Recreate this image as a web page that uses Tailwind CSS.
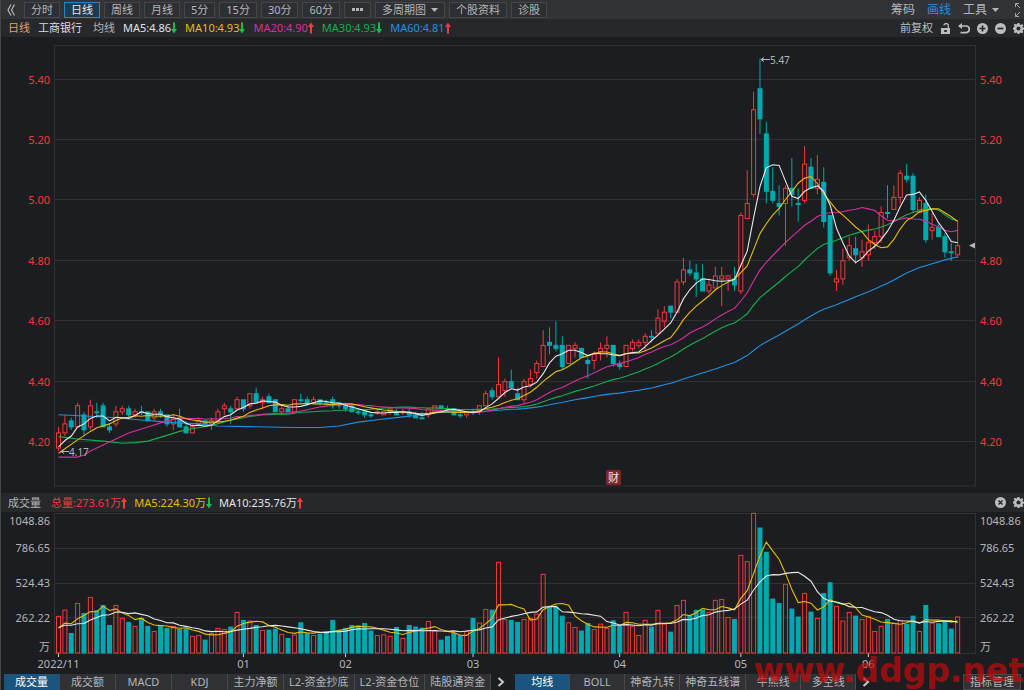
<!DOCTYPE html>
<html lang="zh-CN">
<head>
    <meta charset="UTF-8">
    <meta name="viewport" content="width=device-width, initial-scale=1.0">
    <title>工商银行 日线</title>
    <script src="https://cdn.jsdelivr.net/npm/@tailwindcss/browser@4"></script>
    <style>
        body {
            font-family: 'Noto Sans', 'Noto Sans CJK SC', sans-serif;
        }
    </style>
</head>
<body class="bg-[#1c1d21] text-[11px] leading-4 text-[#b4b5b8]">
    <svg class="hidden">
        <symbol id="up" viewBox="0 0 6 12"><path d="M3 0.5 6 5H4v6.500H2V5H0z" fill="#fb3a3a"/></symbol>
        <symbol id="down" viewBox="0 0 6 12"><path d="M3 11.500 6 7H4V0.500H2V7H0z" fill="#12c04e"/></symbol>
        <symbol id="gear" viewBox="0 0 24 24"><path fill="currentColor" fill-rule="evenodd" d="M10 0h4l.7 3.400 2.200.9 2.900-1.900 2.800 2.800-1.900 2.900.9 2.200L24 10v4l-2.400.7-.9 2.200 1.900 2.900-2.800 2.800-2.900-1.900-2.200.9L14 24h-4l-.7-2.400-2.200-.9-2.900 1.900-2.800-2.800 1.900-2.900-.9-2.200L0 14v-4l2.400-.7.9-2.200-1.900-2.900 2.800-2.800 2.900 1.900 2.200-.9zM12 7.500a4.500 4.500 0 1 0 0 9 4.500 4.500 0 0 0 0-9z"/></symbol>
        <symbol id="next" viewBox="0 0 8 10"><path d="M1.500 1 6 5 1.500 9" fill="none" stroke="currentColor" stroke-width="2"/></symbol>
    </svg>

    <div class="relative min-h-screen overflow-hidden">
        <!-- Period toolbar -->
        <header class="flex h-[19px] items-center justify-between border-l border-[#46474b] bg-[#323337]">
            <nav class="flex items-center gap-1">
                <button type="button" aria-label="收起" class="flex w-[19px] justify-center">
                    <svg class="h-3 w-2" viewBox="0 0 8 12" fill="none" stroke="#b4b5b8" stroke-width="1.2"><path d="M4 0.500 1 6l3 5.500M7.500 0.500 4.500 6l3 5.500"/></svg>
                </button>
                <button type="button" class="flex h-4 items-center border border-[#45464a] bg-[#2e2f33] px-1.5">分时</button>
                <button type="button" class="flex h-4 items-center border border-[#2186d0] bg-[#203a50] px-1.5 text-[#e6e8ea]">日线</button>
                <button type="button" class="flex h-4 items-center border border-[#45464a] bg-[#2e2f33] px-1.5">周线</button>
                <button type="button" class="flex h-4 items-center border border-[#45464a] bg-[#2e2f33] px-1.5">月线</button>
                <button type="button" class="flex h-4 items-center border border-[#45464a] bg-[#2e2f33] px-1.5">5分</button>
                <button type="button" class="flex h-4 items-center border border-[#45464a] bg-[#2e2f33] px-1.5">15分</button>
                <button type="button" class="flex h-4 items-center border border-[#45464a] bg-[#2e2f33] px-1.5">30分</button>
                <button type="button" class="flex h-4 items-center border border-[#45464a] bg-[#2e2f33] px-1.5">60分</button>
                <button type="button" aria-label="更多周期" class="flex h-4 items-center border border-[#45464a] bg-[#2e2f33] px-[7px]">
                    <svg class="h-[3px] w-[11px]" viewBox="0 0 11 3" fill="#b4b5b8"><path d="M0 0h3v3H0zM4 0h3v3H4zM8 0h3v3H8z"/></svg>
                </button>
                <button type="button" class="flex h-4 items-center gap-1 border border-[#45464a] bg-[#2e2f33] px-1.5">多周期图
                    <svg class="ml-px h-1 w-[7px]" viewBox="0 0 7 4"><path d="M0 0h7L3.500 4z" fill="#b4b5b8"/></svg>
                </button>
                <button type="button" class="flex h-4 items-center border border-[#45464a] bg-[#2e2f33] px-1.5">个股资料</button>
                <button type="button" class="flex h-4 items-center border border-[#45464a] bg-[#2e2f33] px-1.5">诊股</button>
            </nav>
            <div class="flex items-center gap-3 pr-[3px] text-xs">
                <button type="button">筹码</button>
                <button type="button" class="text-[#2190e0]">画线</button>
                <button type="button" class="flex items-center gap-1">工具
                    <svg class="ml-px h-1 w-[7px]" viewBox="0 0 7 4"><path d="M0 0h7L3.500 4z" fill="#b4b5b8"/></svg>
                </button>
                <button type="button" aria-label="全屏" class="ml-1">
                    <svg class="h-[14px] w-[6px]" viewBox="0 0 6 14" fill="none" stroke="#a4a5a8"><path d="M.5 4V.5H4M.5.5l4.500 4.500M.5 10v3.500H4M.5 13.500l4.500-4.500"/></svg>
                </button>
            </div>
        </header>

        <!-- Moving average legend -->
        <div class="flex h-[18px] items-center justify-between border-l border-[#46474b] bg-[#27282c]">
            <div class="flex items-center gap-2 pl-[7px]">
                <span class="text-[#dca56c]">日线</span>
                <span class="mr-[3px] text-[#dcdde0]">工商银行</span>
                <span>均线</span>
                <span class="flex items-center text-[#e2e3e6]">MA5:4.86<svg class="h-3 w-1.5"><use href="#down"/></svg></span>
                <span class="flex items-center text-[#e5bd07]">MA10:4.93<svg class="h-3 w-1.5"><use href="#down"/></svg></span>
                <span class="flex items-center text-[#d4309f]">MA20:4.90<svg class="h-3 w-1.5"><use href="#up"/></svg></span>
                <span class="flex items-center text-[#14b04c]">MA30:4.93<svg class="h-3 w-1.5"><use href="#down"/></svg></span>
                <span class="flex items-center text-[#2190e0]">MA60:4.81<svg class="h-3 w-1.5"><use href="#up"/></svg></span>
            </div>
            <div class="flex items-center gap-[7px] text-[#bcbdc0]">
                <button type="button">前复权</button>
                <button type="button" aria-label="解锁">
                    <svg class="h-[11px] w-[11px]" viewBox="0 0 11 11"><path d="M8.300 5.500V3a2.200 2.200 0 0 0-4.400-.6" fill="none" stroke="currentColor" stroke-width="1.300"/><path fill="currentColor" fill-rule="evenodd" d="M1 5h9v6H1zM4.200 7v2h2.600V7z"/></svg>
                </button>
                <button type="button" aria-label="撤销">
                    <svg class="h-[11px] w-[12px]" viewBox="0 0 12 11"><path d="M2 3h6a3.300 3.300 0 0 1 0 6.600H2.500" fill="none" stroke="currentColor" stroke-width="1.700"/><path d="M0 3 4 0v6z" fill="currentColor"/></svg>
                </button>
                <button type="button" aria-label="放大">
                    <svg class="h-[11px] w-[11px]" viewBox="0 0 11 11"><circle cx="5.500" cy="5.500" r="5.500" fill="currentColor"/><path d="M2.500 5.500h6M5.500 2.500v6" stroke="#27282c" stroke-width="1.700"/></svg>
                </button>
                <button type="button" aria-label="缩小">
                    <svg class="h-[11px] w-[11px]" viewBox="0 0 11 11"><circle cx="5.500" cy="5.500" r="5.500" fill="currentColor"/><path d="M2.500 5.500h6" stroke="#27282c" stroke-width="1.700"/></svg>
                </button>
                <button type="button" aria-label="设置"><svg class="h-[11px] w-[11px]"><use href="#gear"/></svg></button>
            </div>
        </div>

        <svg id="priceChart" class="block w-full" viewBox="0 37 1024 456"></svg>

        <!-- Volume legend -->
        <div class="flex h-[19px] items-center justify-between border-l border-[#46474b] bg-[#27282c]">
            <div class="flex items-center gap-[7px] pl-[7px]">
                <span class="mr-[3px]">成交量</span>
                <span class="flex items-center text-[#f03a3a]">总量:273.61万<svg class="h-3 w-1.5"><use href="#up"/></svg></span>
                <span class="flex items-center text-[#e5bd07]">MA5:224.30万<svg class="h-3 w-1.5"><use href="#down"/></svg></span>
                <span class="flex items-center text-[#e2e3e6]">MA10:235.76万<svg class="h-3 w-1.5"><use href="#up"/></svg></span>
            </div>
            <div class="flex items-center gap-[7px] text-[#bcbdc0]">
                <button type="button" aria-label="关闭">
                    <svg class="h-[11px] w-[11px]" viewBox="0 0 11 11"><circle cx="5.500" cy="5.500" r="5.500" fill="currentColor"/><path d="m3.500 3.500 4 4m0-4-4 4" stroke="#27282c" stroke-width="1.500"/></svg>
                </button>
                <button type="button" aria-label="设置"><svg class="h-[11px] w-[11px]"><use href="#gear"/></svg></button>
            </div>
        </div>

        <svg id="volumeChart" class="block w-full" viewBox="0 512 1024 162"></svg>

        <!-- Indicator tabs -->
        <footer class="flex h-4 items-stretch border-l border-[#46474b] pl-[3px]">
            <nav class="flex bg-[#303135]">
                <button type="button" class="min-w-[56px] border-r border-[#48494d] bg-[#1b557f] px-[5px] text-white">成交量</button>
                <button type="button" class="min-w-[56px] border-r border-[#48494d] px-[5px]">成交额</button>
                <button type="button" class="min-w-[56px] border-r border-[#48494d] px-[5px]">MACD</button>
                <button type="button" class="min-w-[56px] border-r border-[#48494d] px-[5px]">KDJ</button>
                <button type="button" class="min-w-[56px] border-r border-[#48494d] px-[5px]">主力净额</button>
                <button type="button" class="min-w-[56px] border-r border-[#48494d] px-[5px]">L2-资金抄底</button>
                <button type="button" class="min-w-[56px] border-r border-[#48494d] px-[5px]">L2-资金仓位</button>
                <button type="button" class="min-w-[56px] border-r border-[#48494d] px-[5px]">陆股通资金</button>
            </nav>
            <button type="button" aria-label="更多副图指标" class="flex w-6 items-center justify-center pr-1 text-[#c8c9cc]"><svg class="h-[10px] w-2"><use href="#next"/></svg></button>
            <nav class="flex bg-[#303135]">
                <button type="button" class="min-w-[55px] border-r border-[#48494d] bg-[#1b557f] px-[5px] text-white">均线</button>
                <button type="button" class="min-w-[55px] border-r border-[#48494d] px-[5px]">BOLL</button>
                <button type="button" class="min-w-[55px] border-r border-[#48494d] px-[5px]">神奇九转</button>
                <button type="button" class="min-w-[55px] border-r border-[#48494d] px-[5px]">神奇五线谱</button>
                <button type="button" class="min-w-[55px] border-r border-[#48494d] px-[5px]">牛熊线</button>
                <button type="button" class="min-w-[55px] border-r border-[#48494d] px-[5px]">多空线</button>
            </nav>
            <button type="button" aria-label="更多主图指标" class="flex w-5 items-center justify-center text-[#c8c9cc]"><svg class="h-[10px] w-2"><use href="#next"/></svg></button>
            <button type="button" class="mr-[3px] ml-auto border border-[#48494d] bg-[#303135] px-1.5 leading-[14px]">指标管理</button>
        </footer>

        <div class="pointer-events-none absolute right-0 bottom-0 font-['DejaVu_Sans'] text-[33px] leading-[38px] font-bold text-[#c80a0a]/70">www.ddgp.net</div>
    </div>

    <script>
        // [direction, body top, body bottom, high, low] in cents; r = close up, g = close down
        const candles = `
            r423,418,425,417 r426,423,429,422 g427,425,428,424 r432,425,433,425 g429,424,430,422 r432,425,434,424 g430,430,433,428
            g432,425,433,425 g425,424,426,423 r430,426,432,425 r431,430,432,429 g431,429,432,428 r430,429,431,428 g430,430,432,429
            g430,427,430,427 r430,428,431,427 g430,429,431,428 g429,426,429,425 r428,426,429,424 g428,425,431,425 g425,423,427,423
            r425,423,426,423 r427,426,428,426 g427,426,427,425 r427,426,428,424 r430,427,431,427 r432,431,433,429 g431,430,432,426
            r434,431,435,431 g434,431,434,430 r436,432,436,431 g436,433,438,433 r434,433,435,431 g435,433,436,433 g434,430,434,430
            r431,430,432,429 g431,430,432,430 r434,430,434,430 g434,434,436,433 g434,433,435,432 r434,433,435,433 g434,433,434,432
            g433,433,434,432 g434,432,435,431 g433,432,433,431 g432,431,433,430 g432,430,432,430 g430,430,431,429 g430,429,430,428
            g429,429,430,428 r430,430,431,429 r430,429,430,429 r431,430,431,429 g430,429,431,429 r430,430,431,429 g430,429,431,428
            g429,428,430,428 g428,428,430,428 r431,429,431,428 r432,430,432,430 g432,431,432,430 g431,431,432,430 g431,429,431,429
            g429,429,430,428 r430,429,430,428 g430,430,431,429 r432,430,432,429 r436,432,437,432 g437,435,438,434 r439,435,448,435
            r440,437,441,435 g440,438,444,438 g436,434,438,434 r440,434,441,433 r441,439,444,438 r446,443,447,441 r452,445,457,445
            g453,452,458,449 g452,451,460,450 g452,445,455,444 r452,446,452,446 r452,451,453,448 g451,448,451,448 g447,446,448,441
            r449,447,450,444 r451,450,453,447 r452,451,455,448 g452,446,452,445 g446,445,447,444 r452,445,452,445 r453,451,454,450
            r453,452,454,451 r455,453,456,450 g455,455,457,453 r461,456,464,456 r463,460,465,458 g465,463,465,461 r473,463,474,463
            r477,473,481,472 g477,476,480,475 g476,474,479,468 g474,470,479,470 r472,470,474,469 r475,471,478,471 r475,474,478,465
            r475,474,475,470 g474,472,478,470 r495,470,496,469 r499,494,510,494 r530,502,536,501 g537,527,547,522 g522,503,526,499
            g503,500,511,499 g499,498,505,495 r504,499,505,485 g504,502,514,498 g499,499,504,493 r512,500,518,499 g511,504,514,504
            r507,504,515,502 g506,493,511,491 g495,476,495,475 r474,473,477,470 r480,474,484,472 r485,481,488,480 g484,482,488,479
            r483,481,487,478 r486,482,492,480 r488,486,490,484 r496,488,498,486 g496,496,505,494 r501,497,505,497 r509,501,510,499
            g508,507,512,506 g508,497,509,496 r500,496,501,496 g499,487,502,486 r491,490,496,487 g491,488,492,488 g488,483,489,481
            g483,483,486,480 r485,482,493,481`.trim().split(/\s+/).map(s => {
                const [top, bottom, high, low] = s.slice(1).split(',').map(Number);
                return { up: s[0] === 'r', top, bottom, high, low };
            });

        const volumes = [
            278, 325, 150, 375, 300, 420, 320, 360, 210, 360, 263, 233, 203, 263, 203, 165, 210, 188, 203, 180,
            183, 128, 135, 100, 150, 188, 180, 198, 308, 248, 243, 210, 173, 175, 183, 143, 113, 138, 230, 148,
            135, 145, 158, 248, 175, 188, 210, 205, 225, 168, 135, 140, 128, 195, 113, 210, 198, 190, 240, 168,
            100, 128, 150, 135, 165, 263, 228, 330, 325, 683, 253, 248, 233, 255, 263, 295, 593, 353, 350, 280,
            230, 195, 168, 225, 180, 220, 188, 245, 205, 308, 203, 135, 248, 198, 323, 220, 160, 360, 398, 283,
            323, 325, 308, 398, 405, 270, 255, 735, 688, 1050, 940, 758, 408, 375, 518, 333, 273, 450, 310, 263,
            450, 530, 353, 243, 308, 280, 255, 278, 165, 203, 255, 225, 248, 218, 280, 165, 360, 228, 223, 240,
            183, 274
        ];

        const RED = '#f03a3a', TEAL = '#00a8b0', GRID = '#303135', TEXT = '#b4b5b8';
        const LEFT = 54.5, RIGHT = 975.5;
        const x = i => 58.5 + i * 6.377;
        const py = cents => 442 - (cents - 420) * 3.02;
        const vy = v => 653.5 - v * 0.1335;

        const line = (x1, y1, x2, y2, color) => `<line x1="${x1}" y1="${y1}" x2="${x2}" y2="${y2}" stroke="${color}"/>`;
        const text = (tx, ty, str, color, anchor = 'start', size = 11) =>
            `<text x="${tx}" y="${ty}" fill="${color}" text-anchor="${anchor}" font-size="${size}">${str}</text>`;

        // lead: known averages from before the window has enough bars
        function average(values, n, lead, toY, color) {
            const pts = lead.map(([i, v]) => [x(i), toY(v)]);
            for (let i = n - 1; i < values.length; i++) {
                const sum = values.slice(i - n + 1, i + 1).reduce((a, b) => a + b, 0);
                pts.push([x(i), toY(sum / n)]);
            }
            return `<polyline fill="none" stroke="${color}" stroke-width="1.1" points="${pts.map(p => p.map(v => v.toFixed(1)).join()).join(' ')}"/>`;
        }

        function drawPrice() {
            let out = line(0.5, 37, 0.5, 493, '#46474b');
            out += `<rect x="${LEFT}" y="45.500" width="${RIGHT - LEFT}" height="440.500" fill="none" stroke="${GRID}"/>`;
            for (let p = 420; p <= 540; p += 20) {
                const y = Math.round(py(p)) - 0.5, label = (p / 100).toFixed(2);
                out += line(LEFT, y, RIGHT, y, GRID);
                out += text(50, y + 4.5, label, RED, 'end') + text(980, y + 4.5, label, RED);
            }
            candles.forEach((c, i) => {
                const cx = x(i), color = c.up ? RED : TEAL;
                const top = py(c.top), h = Math.max(py(c.bottom) - top, 1);
                out += line(cx, py(c.high), cx, top, color) + line(cx, top + h, cx, py(c.low), color);
                out += c.up
                    ? `<rect x="${cx - 2}" y="${top}" width="4" height="${h}" fill="none" stroke="${color}"/>`
                    : `<rect x="${cx - 2.5}" y="${top - 0.5}" width="5" height="${h + 1}" fill="${color}"/>`;
            });
            const close = candles.map(c => c.up ? c.top : c.bottom);
            out += average(close, 60, [[0, 429], [5, 428.5], [9, 428], [13, 427.3], [17, 426.6], [22, 426], [25, 425.3], [30, 425.1], [37, 424.8], [41, 424.8], [44, 425.3], [47, 426.6], [50, 427.4], [54, 428.3], [57, 429]], py, '#2190e0');
            out += average(close, 30, [[0, 421.8], [3, 421], [7, 420.3], [10, 419.6], [12, 419.8], [14, 420.3], [17, 422.2], [19, 423.5], [21, 424.4], [24, 425.5], [27, 427.2]], py, '#14b04c');
            out += average(close, 20, [[0, 415], [3, 415], [4, 415.7], [5, 417], [8, 420], [11, 423], [14, 425], [17, 427]], py, '#d4309f');
            out += average(close, 10, [[0, 416.3], [3, 420.7], [5, 423.5], [6, 424.7], [8, 426]], py, '#e5bd07');
            out += average(close, 5, [[0, 418.4], [1, 420.5], [2, 422], [3, 425]], py, '#e8e8ea');

            // high / low markers
            out += `<path d="M761 59.500h9M764 57.500l-3 2 3 2M61 451.500h8M64 449.500l-3 2 3 2" fill="none" stroke="${TEXT}"/>`;
            out += text(770, 64, '5.47', TEXT, 'start', 10) + text(69, 456, '4.17', TEXT, 'start', 10);
            out += `<path d="M969 245.500l6-3v6z" fill="${TEXT}"/>`;
            out += `<rect x="606" y="470" width="15" height="15" rx="1.500" fill="#80262a"/>` + text(613.5, 482, '财', '#f0e4e4', 'middle');
            document.getElementById('priceChart').innerHTML = out;
        }

        function drawVolume() {
            let out = line(0.5, 512, 0.5, 674, '#46474b');
            out += `<rect x="${LEFT}" y="513.500" width="${RIGHT - LEFT}" height="140" fill="none" stroke="${GRID}"/>`;
            [['1048.86', 525], ['786.65', 552], ['524.43', 587], ['262.22', 622], ['万', 651]].forEach(([label, y]) => {
                out += text(50, y, label, TEXT, 'end') + text(980, y, label, TEXT);
            });
            [548.5, 583.5, 617.5].forEach(y => out += line(LEFT, y, RIGHT, y, GRID));
            volumes.forEach((v, i) => {
                const cx = x(i), y = vy(v);
                out += candles[i].up
                    ? `<rect x="${cx - 2}" y="${y}" width="4" height="${653 - y}" fill="none" stroke="${RED}"/>`
                    : `<rect x="${cx - 2.5}" y="${y - 0.5}" width="5" height="${654 - y}" fill="${TEAL}"/>`;
            });
            out += average(volumes, 5, [[0, 190], [1, 228], [2, 223], [3, 260]], vy, '#e5bd07');
            out += average(volumes, 10, [[0, 195], [1, 212], [2, 212], [3, 223], [4, 225], [5, 250], [6, 270], [7, 288], [8, 290]], vy, '#e8e8ea');
            [[0, '2022/11'], [29, '01'], [45, '02'], [65, '03'], [88, '04'], [107, '05'], [127, '06']].forEach(([i, label]) => {
                out += line(x(i), 653.5, x(i), 657, '#d0d0d2') + text(x(i), 668, label, TEXT, 'middle');
            });
            document.getElementById('volumeChart').innerHTML = out;
        }

        drawPrice();
        drawVolume();
    </script>
</body>
</html>
